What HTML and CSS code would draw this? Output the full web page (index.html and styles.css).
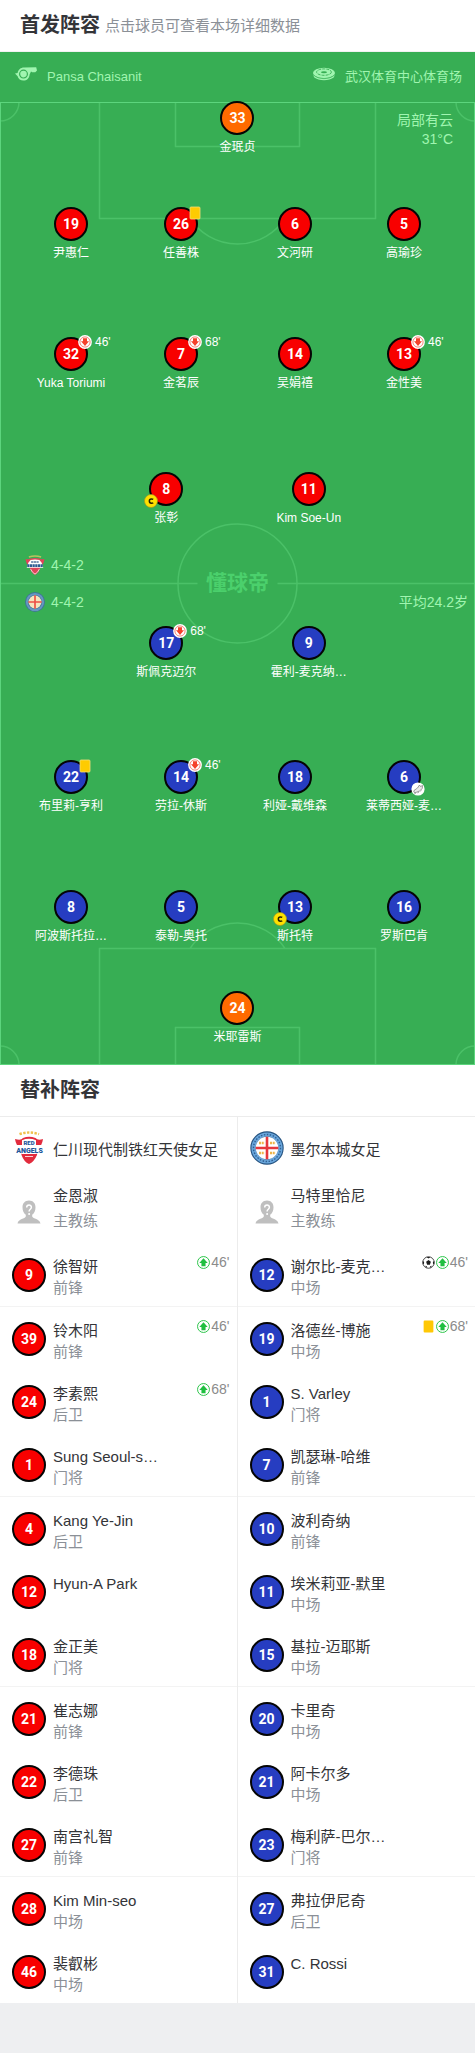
FILE: index.html
```html
<!DOCTYPE html>
<html lang="zh-CN">
<head>
<meta charset="utf-8">
<meta name="viewport" content="width=device-width, initial-scale=1">
<title>首发阵容</title>
<link rel="stylesheet" href="styles.css">
</head>
<body>
<svg class="sprite" aria-hidden="true">
  <symbol id="whistle" viewBox="0 0 22 14">
    <path fill="currentColor" d="M0 6.5 2.6 6C3.2 2.7 5.800.5 9 .5L21.200.2 22 3.400 20.300 5.200H17.200L16 4.400 14.600 7.400C14.400 11 11.800 13.600 8.400 13.600 5.600 13.600 3.300 12 2.600 9.300Z"/>
    <circle cx="8.500" cy="7.100" r="3.900" fill="none" stroke="#37ae54" stroke-width="1.200"/>
  </symbol>
  <symbol id="stadium" viewBox="0 0 22 13">
    <ellipse cx="11" cy="5.400" rx="11" ry="5.200" fill="currentColor"/>
    <ellipse cx="11" cy="4.600" rx="7.400" ry="3.200" fill="none" stroke="#37ae54" stroke-width=".9" stroke-dasharray="3 1"/>
    <ellipse cx="11" cy="4.800" rx="3" ry="1" fill="#37ae54"/>
    <path fill="currentColor" d="M.4 7.200C5 12 17 12 21.600 7.200L21 9.800C16 13.800 6 13.800 1 9.800Z"/>
    <path fill="none" stroke="#37ae54" stroke-width=".7" d="M.6 7.600C5.500 12.300 16.500 12.300 21.400 7.600"/>
  </symbol>
  <symbol id="crest-angels-small" viewBox="0 0 18 18">
    <path fill="none" stroke="#b9c25e" stroke-width="1.300" d="M3.500 1.800Q9 0 14.500 1.800"/>
    <path fill="#e0435a" d="M.5 3.500Q4 4.500 5 3.200Q9 2 13 3.200Q14 4.500 17.500 3.500Q17 8 14.500 10L13 13.500Q11.500 17 9 18Q6.500 17 5 13.500L3.500 10Q1 8 .5 3.500Z"/>
    <path fill="#fff" d="M5 4.500Q9 3.500 13 4.500L15 7 16.500 11.500H1.500L3 7Z"/>
    <path stroke="#54749f" stroke-width="1.500" stroke-dasharray="2 .4" d="M5.500 6.300H12.500"/>
    <path stroke="#2f5d93" stroke-width="2.400" stroke-dasharray="2 .4" d="M2 9.500H16"/>
    <path fill="none" stroke="#f4cdd0" stroke-width=".9" d="M5 12.500Q6.500 16 9 17.200Q11.500 16 13 12.500"/>
  </symbol>
  <symbol id="crest-city" viewBox="0 0 34 34">
    <circle cx="17" cy="17" r="16.700" fill="#25527f"/>
    <circle cx="17" cy="17" r="13.500" fill="none" stroke="#69a6dc" stroke-width="4.200"/>
    <circle cx="17" cy="17" r="13.500" fill="none" stroke="#315f91" stroke-width="1.400" stroke-dasharray="1.500 1.500"/>
    <circle cx="17" cy="17" r="11.300" fill="#fff"/>
    <path stroke="#efb44a" stroke-width="2.600" stroke-dasharray="2 .7" d="M9 12H14.500M20 12H25.500M9 22H14.500M20 22H25.500"/>
    <path stroke="#e6383d" stroke-width="2.600" d="M17 5.700V28.300M5.700 17H28.300"/>
  </symbol>
  <symbol id="crest-city-small" viewBox="0 0 18 18">
    <circle cx="9" cy="9" r="9" fill="#3f7795"/>
    <circle cx="9" cy="9" r="7.300" fill="none" stroke="#6596c2" stroke-width="1.800"/>
    <circle cx="9" cy="9" r="5.800" fill="#f5e5bd"/>
    <path stroke="#ee5046" stroke-width="1.500" d="M9 3V15M3 9H15"/>
  </symbol>
  <symbol id="coach" viewBox="0 0 24 24">
    <path fill="#bfbfbf" d="M12 .5C16 .5 18.500 3.300 18.500 7.200 18.500 10.600 17.300 13.200 15.200 14.800V16.500C16 19 22.500 18.500 23.500 23.500H.5C1.500 18.500 8 19 8.800 16.500V14.800C6.700 13.200 5.500 10.600 5.500 7.200 5.500 3.300 8 .5 12 .5Z"/>
    <path fill="none" stroke="#fff" stroke-width="1.500" d="M9.700 7.500C9.700 4.300 14.400 4.300 14.400 7.300 14.400 9.300 12.100 9.300 12.100 11.500"/>
    <circle cx="12.100" cy="14" r="1" fill="#fff"/>
  </symbol>
  <symbol id="sub-out" viewBox="0 0 14 14">
    <circle cx="7" cy="7" r="6.900" fill="#fff"/>
    <circle cx="7" cy="7" r="5.100" fill="none" stroke="#f5776a" stroke-width=".9"/>
    <path fill="#f5412b" d="M5 3.200H9V6.300H11L7 11 3 6.300H5Z"/>
  </symbol>
  <symbol id="sub-in" viewBox="0 0 12 12">
    <circle cx="6" cy="6" r="5.500" fill="#fff" stroke="#27c346" stroke-width=".9"/>
    <path fill="#20bf40" d="M4.100 9.400H7.900V6.400H9.900L6 2 2.100 6.400H4.100Z"/>
  </symbol>
  <symbol id="captain" viewBox="0 0 14 14">
    <circle cx="7" cy="7" r="6.500" fill="#ffe100" stroke="#a69a20" stroke-width=".7"/>
    <path fill="none" stroke="#221f00" stroke-width="1.500" d="M9.200 5.400Q8.700 5 7.300 5C4.700 5 4.700 9.200 7.300 9.200Q8.700 9.200 9.200 8.700"/>
  </symbol>
  <symbol id="card" viewBox="0 0 12 14">
    <rect x="1" y="1" width="10" height="12" rx="1" fill="#fecb01" stroke="#f5dc7a" stroke-width=".8"/>
  </symbol>
  <symbol id="card-flat" viewBox="0 0 10 12">
    <rect x=".5" y=".5" width="9" height="11" rx="1" fill="#ffc805"/>
  </symbol>
  <symbol id="boot" viewBox="0 0 14 14">
    <circle cx="7" cy="7" r="6.600" fill="#fff"/>
    <path fill="#e9e9e9" stroke="#777" stroke-width=".7" d="M3 8.500 6.500 6 8.500 3 9.500 4.500 11.500 3.500 11.300 6.500 8.500 9 4 10.800 2.800 10Z"/>
    <path stroke="#777" stroke-width=".7" d="M3.500 11.500 5 11M6.500 10.800 8 10M9.500 9.200 10.500 8.300"/>
  </symbol>
  <symbol id="ball" viewBox="0 0 12 12">
    <circle cx="6" cy="6" r="5.300" fill="#fff" stroke="#2b2b2b" stroke-width=".8"/>
    <path fill="#1d1d1d" d="M6 3.800 8.200 5.400 7.300 8H4.700L3.800 5.400ZM4.200.9H7.800L6 2.300ZM.7 4.600 2 5.600 1.600 7.800.7 7.200ZM11.300 4.600 10 5.600 10.400 7.800 11.300 7.200ZM2.700 9 4.500 9.400 4.600 11.100ZM9.300 9 7.500 9.400 7.400 11.100Z"/>
  </symbol>
</svg>

<main class="page">
  <header class="section-head">
    <h1 class="section-title">首发阵容</h1>
    <p class="section-note">点击球员可查看本场详细数据</p>
  </header>

  <section class="pitch">
    <div class="match-info">
      <span class="info-item"><svg class="info-icon"><use href="#whistle"/></svg>Pansa Chaisanit</span>
      <span class="info-item"><svg class="info-icon"><use href="#stadium"/></svg>武汉体育中心体育场</span>
    </div>
    <div class="field">
      <svg class="field-lines" viewBox="0 0 475 964" preserveAspectRatio="none" aria-hidden="true">
        <g fill="none" stroke="#4bc168" stroke-width="1.500">
          <path d="M99.500 1V117.500H375.500V1M175.500 1V45.500H299.500V1M190 117.500A57 57 0 0 0 285 117.500"/>
          <path d="M99.500 963V847.500H375.500V963M175.500 963V926.500H299.500V963M190 847.500A57 57 0 0 1 285 847.500"/>
          <path d="M0 482.500H197.500M277.500 482.500H475"/>
          <circle cx="237.500" cy="482.500" r="59.500"/>
          <path d="M19 1A19 19 0 0 1 0 20M456 1A19 19 0 0 0 475 20M19 963A19 19 0 0 0 0 945M456 963A19 19 0 0 1 475 945"/>
        </g>
        <rect x=".5" y="1.500" width="474" height="962" fill="none" stroke="#5cd57d"/>
      </svg>
      <p class="weather">局部有云<br>31°C</p>

      <div class="line line-one">
        <button class="player" type="button"><span class="shirt keeper">33</span><span class="player-name">金珉贞</span></button>
      </div>
      <div class="line line-four gap-48">
        <button class="player" type="button"><span class="shirt home">19</span><span class="player-name">尹惠仁</span></button>
        <button class="player" type="button"><span class="shirt home">26<svg class="mark mark-card"><use href="#card"/></svg></span><span class="player-name">任善株</span></button>
        <button class="player" type="button"><span class="shirt home">6</span><span class="player-name">文河研</span></button>
        <button class="player" type="button"><span class="shirt home">5</span><span class="player-name">高瑜珍</span></button>
      </div>
      <div class="line line-four gap-72">
        <button class="player" type="button"><span class="shirt home">32<svg class="mark mark-top"><use href="#sub-out"/></svg><span class="minute">46'</span></span><span class="player-name">Yuka Toriumi</span></button>
        <button class="player" type="button"><span class="shirt home">7<svg class="mark mark-top"><use href="#sub-out"/></svg><span class="minute">68'</span></span><span class="player-name">金茗辰</span></button>
        <button class="player" type="button"><span class="shirt home">14</span><span class="player-name">吴娟禧</span></button>
        <button class="player" type="button"><span class="shirt home">13<svg class="mark mark-top"><use href="#sub-out"/></svg><span class="minute">46'</span></span><span class="player-name">金性美</span></button>
      </div>
      <div class="line line-two gap-77">
        <button class="player" type="button"><span class="shirt home">8<svg class="mark mark-captain"><use href="#captain"/></svg></span><span class="player-name">张彰</span></button>
        <button class="player" type="button"><span class="shirt home">11</span><span class="player-name">Kim Soe-Un</span></button>
      </div>

      <div class="midfield">
        <p class="formation"><svg class="formation-crest"><use href="#crest-angels-small"/></svg>4-4-2</p>
        <p class="formation"><svg class="formation-crest"><use href="#crest-city-small"/></svg>4-4-2<span class="average-age">平均24.2岁</span></p>
        <span class="watermark">懂球帝</span>
      </div>

      <div class="line line-two">
        <button class="player" type="button"><span class="shirt away">17<svg class="mark mark-top"><use href="#sub-out"/></svg><span class="minute">68'</span></span><span class="player-name">斯佩克迈尔</span></button>
        <button class="player" type="button"><span class="shirt away">9</span><span class="player-name">霍利-麦克纳…</span></button>
      </div>
      <div class="line line-four gap-76">
        <button class="player" type="button"><span class="shirt away">22<svg class="mark mark-card"><use href="#card"/></svg></span><span class="player-name">布里莉-亨利</span></button>
        <button class="player" type="button"><span class="shirt away">14<svg class="mark mark-top"><use href="#sub-out"/></svg><span class="minute">46'</span></span><span class="player-name">劳拉-休斯</span></button>
        <button class="player" type="button"><span class="shirt away">18</span><span class="player-name">利娅-戴维森</span></button>
        <button class="player" type="button"><span class="shirt away">6<svg class="mark mark-boot"><use href="#boot"/></svg></span><span class="player-name">莱蒂西娅-麦…</span></button>
      </div>
      <div class="line line-four gap-72">
        <button class="player" type="button"><span class="shirt away">8</span><span class="player-name">阿波斯托拉…</span></button>
        <button class="player" type="button"><span class="shirt away">5</span><span class="player-name">泰勒-奥托</span></button>
        <button class="player" type="button"><span class="shirt away">13<svg class="mark mark-captain"><use href="#captain"/></svg></span><span class="player-name">斯托特</span></button>
        <button class="player" type="button"><span class="shirt away">16</span><span class="player-name">罗斯巴肯</span></button>
      </div>
      <div class="line line-one gap-43">
        <button class="player" type="button"><span class="shirt keeper">24</span><span class="player-name">米耶雷斯</span></button>
      </div>
    </div>
  </section>

  <header class="section-head bench-head">
    <h2 class="section-title">替补阵容</h2>
  </header>

  <section class="bench">
    <div class="bench-team">
      <h3 class="team">
        <svg class="team-crest" viewBox="0 0 34 34" aria-hidden="true">
          <path fill="none" stroke="#f0c04c" stroke-width="2.400" stroke-dasharray="2.400 1.400" d="M7.500 3.200Q17 -.2 27 3.200"/>
          <path fill="#e22b3d" d="M3 8Q9 10 11 7Q17 4.500 23.500 7Q26 10 31 8Q30 15 26 17L25 24Q22 31 17 33Q12 31 9.500 24L8.500 17Q4 15 3 8Z"/>
          <path fill="#fff" d="M10 9.200Q17 6.500 24 9.200V14H31V22.500H26L23.500 23H10.500L8 22.500H4V14H10Z"/>
          <g fill="#20569b" font-family="Roboto, sans-serif" font-weight="900" text-anchor="middle">
            <text x="17" y="14" font-size="6">RED</text>
            <text x="17.500" y="22" font-size="7">ANGELS</text>
          </g>
          <path fill="none" stroke="#fff" stroke-width=".8" d="M13 25.500H21"/>
        </svg>仁川现代制铁红天使女足</h3>
      <div class="coach"><svg class="coach-icon"><use href="#coach"/></svg><p class="coach-text">金恩淑<span class="role">主教练</span></p></div>
      <ul class="subs">
        <li class="sub"><span class="shirt home">9</span><a class="sub-text" href="#">徐智妍<span class="role">前锋</span></a><span class="events"><svg class="event"><use href="#sub-in"/></svg>46'</span></li>
        <li class="sub"><span class="shirt home">39</span><a class="sub-text" href="#">铃木阳<span class="role">前锋</span></a><span class="events"><svg class="event"><use href="#sub-in"/></svg>46'</span></li>
        <li class="sub"><span class="shirt home">24</span><a class="sub-text" href="#">李素熙<span class="role">后卫</span></a><span class="events"><svg class="event"><use href="#sub-in"/></svg>68'</span></li>
        <li class="sub"><span class="shirt home">1</span><a class="sub-text" href="#">Sung Seoul-s…<span class="role">门将</span></a></li>
        <li class="sub"><span class="shirt home">4</span><a class="sub-text" href="#">Kang Ye-Jin<span class="role">后卫</span></a></li>
        <li class="sub"><span class="shirt home">12</span><a class="sub-text" href="#">Hyun-A Park</a></li>
        <li class="sub"><span class="shirt home">18</span><a class="sub-text" href="#">金正美<span class="role">门将</span></a></li>
        <li class="sub"><span class="shirt home">21</span><a class="sub-text" href="#">崔志娜<span class="role">前锋</span></a></li>
        <li class="sub"><span class="shirt home">22</span><a class="sub-text" href="#">李德珠<span class="role">后卫</span></a></li>
        <li class="sub"><span class="shirt home">27</span><a class="sub-text" href="#">南宫礼智<span class="role">前锋</span></a></li>
        <li class="sub"><span class="shirt home">28</span><a class="sub-text" href="#">Kim Min-seo<span class="role">中场</span></a></li>
        <li class="sub"><span class="shirt home">46</span><a class="sub-text" href="#">裴叡彬<span class="role">中场</span></a></li>
      </ul>
    </div>
    <div class="bench-team">
      <h3 class="team"><svg class="team-crest"><use href="#crest-city"/></svg>墨尔本城女足</h3>
      <div class="coach"><svg class="coach-icon"><use href="#coach"/></svg><p class="coach-text">马特里恰尼<span class="role">主教练</span></p></div>
      <ul class="subs">
        <li class="sub"><span class="shirt away">12</span><a class="sub-text" href="#">谢尔比-麦克…<span class="role">中场</span></a><span class="events"><svg class="event"><use href="#ball"/></svg><svg class="event"><use href="#sub-in"/></svg>46'</span></li>
        <li class="sub"><span class="shirt away">19</span><a class="sub-text" href="#">洛德丝-博施<span class="role">中场</span></a><span class="events"><svg class="event"><use href="#card-flat"/></svg><svg class="event"><use href="#sub-in"/></svg>68'</span></li>
        <li class="sub"><span class="shirt away">1</span><a class="sub-text" href="#">S. Varley<span class="role">门将</span></a></li>
        <li class="sub"><span class="shirt away">7</span><a class="sub-text" href="#">凯瑟琳-哈维<span class="role">前锋</span></a></li>
        <li class="sub"><span class="shirt away">10</span><a class="sub-text" href="#">波利奇纳<span class="role">前锋</span></a></li>
        <li class="sub"><span class="shirt away">11</span><a class="sub-text" href="#">埃米莉亚-默里<span class="role">中场</span></a></li>
        <li class="sub"><span class="shirt away">15</span><a class="sub-text" href="#">基拉-迈耶斯<span class="role">中场</span></a></li>
        <li class="sub"><span class="shirt away">20</span><a class="sub-text" href="#">卡里奇<span class="role">中场</span></a></li>
        <li class="sub"><span class="shirt away">21</span><a class="sub-text" href="#">阿卡尔多<span class="role">中场</span></a></li>
        <li class="sub"><span class="shirt away">23</span><a class="sub-text" href="#">梅利萨-巴尔…<span class="role">门将</span></a></li>
        <li class="sub"><span class="shirt away">27</span><a class="sub-text" href="#">弗拉伊尼奇<span class="role">后卫</span></a></li>
        <li class="sub"><span class="shirt away">31</span><a class="sub-text" href="#">C. Rossi</a></li>
      </ul>
    </div>
  </section>
</main>
</body>
</html>
```

FILE: styles.css
```css
* {
  box-sizing: border-box;
}

body {
  margin: 0;
  background: #eeeff1;
  color: #333438;
  font-family: "Liberation Sans", "Noto Sans CJK SC", sans-serif;
  font-size: 15px;
}

h1, h2, h3, p, ul {
  margin: 0;
  padding: 0;
  font-weight: normal;
}

.sprite {
  position: absolute;
  width: 0;
  height: 0;
}

.page {
  padding-bottom: 50px;
}

/* Section headings */
.section-head {
  display: flex;
  align-items: center;
  gap: 5px;
  height: 52px;
  padding: 0 20px 2px;
  background: #fff;
  border-bottom: 1px solid #f1f1f1;
}

.section-title {
  font-size: 20px;
  font-weight: bold;
  line-height: 28px;
}

.section-note {
  color: #8b9097;
  font-size: 15px;
}

.bench-head {
  border-bottom-color: #ececec;
}

/* Pitch */
.pitch {
  background: #37ae54;
  color: #a0f5b0;
}

.match-info {
  display: flex;
  justify-content: space-between;
  height: 49px;
  padding: 0 13px 0 15px;
  font-size: 13px;
  line-height: 49px;
}

.info-item {
  display: flex;
  gap: 10px;
}

.info-icon {
  width: 22px;
  height: 14px;
  margin-top: 15px;
}

.field {
  position: relative;
  padding-bottom: 16px;
}

.field-lines {
  position: absolute;
  top: 0;
  left: 0;
  width: 100%;
  height: 100%;
}

.weather {
  position: absolute;
  top: 10px;
  right: 22px;
  font-size: 14px;
  line-height: 19px;
  text-align: right;
}

.line {
  position: relative;
  display: grid;
  justify-items: center;
}

.line-two {
  grid-template-columns: 1fr 1fr;
  padding: 0 20%;
}

.line-four {
  grid-template-columns: 110fr 110fr 118fr 100fr;
  padding: 0 21px 0 16px;
}

.gap-43 { margin-top: 43px; }
.gap-48 { margin-top: 48px; }
.gap-72 { margin-top: 72px; }
.gap-76 { margin-top: 76px; }
.gap-77 { margin-top: 77px; }

.player {
  display: flex;
  flex-direction: column;
  align-items: center;
  padding: 0;
  border: 0;
  background: none;
  color: #fff;
  font: inherit;
  cursor: pointer;
}

.player-name {
  font-size: 12px;
  line-height: 24px;
  white-space: nowrap;
}

.shirt {
  position: relative;
  flex: none;
  width: 34px;
  height: 34px;
  border: 2px solid #050505;
  border-radius: 50%;
  color: #fff;
  font-family: Roboto, "Liberation Sans", sans-serif;
  font-size: 14px;
  font-weight: bold;
  line-height: 30px;
  text-align: center;
}

.home { background: #f80000; }
.away { background: #263dc1; }
.keeper { background: #ff6a00; }

.mark {
  position: absolute;
  width: 14px;
  height: 14px;
}

.mark-top { top: -4px; left: 22px; }
.mark-card { top: -3px; left: 22px; }
.mark-captain { bottom: -4px; left: -7px; }
.mark-boot { right: -6px; bottom: -4px; }

.minute {
  position: absolute;
  top: -6px;
  left: 39px;
  font-family: "Liberation Sans", sans-serif;
  font-size: 12px;
  font-weight: normal;
  line-height: 18px;
}

.midfield {
  position: relative;
  display: flex;
  flex-direction: column;
  gap: 17px;
  padding: 25px 7px 14px 25px;
}

.formation {
  display: flex;
  align-items: center;
  gap: 6px;
  font-size: 14px;
  line-height: 20px;
}

.formation-crest {
  width: 20px;
  height: 20px;
}

.average-age {
  margin-left: auto;
}

.watermark {
  position: absolute;
  top: 38px;
  right: 0;
  left: 0;
  color: #4bd06c;
  font-size: 21px;
  font-weight: bold;
  line-height: 30px;
  text-align: center;
}

/* Bench */
.bench {
  display: grid;
  grid-template-columns: 1fr 1fr;
  background: #fff;
}

.bench-team:first-child {
  border-right: 1px solid #ececec;
}

.team {
  display: flex;
  align-items: center;
  gap: 7px;
  height: 64px;
  padding: 0 0 2px 12px;
  font-size: 15px;
}

.team-crest {
  width: 34px;
  height: 34px;
}

.coach {
  display: flex;
  align-items: center;
  gap: 12px;
  height: 62px;
  padding-left: 17px;
}

.coach-icon {
  width: 24px;
  height: 24px;
}

.coach-text {
  line-height: 25px;
  padding-bottom: 8px;
}

.role {
  display: block;
  color: #8b9097;
}

.subs {
  list-style: none;
}

.sub {
  display: flex;
  align-items: flex-start;
  gap: 7px;
  height: 63px;
  padding: 10px 7px 0 12px;
}

.sub:nth-child(3n + 1) {
  height: 64px;
  border-bottom: 1px solid #f3f3f3;
}

.sub .shirt {
  margin-top: 5px;
}

.sub-text {
  flex: 1;
  margin-top: 3px;
  color: inherit;
  line-height: 21px;
  text-decoration: none;
  white-space: nowrap;
}

.events {
  display: flex;
  align-items: center;
  gap: 1px;
  color: #8b8b8b;
  font-size: 14px;
  line-height: 18px;
}

.event {
  width: 13px;
  height: 13px;
}
```
